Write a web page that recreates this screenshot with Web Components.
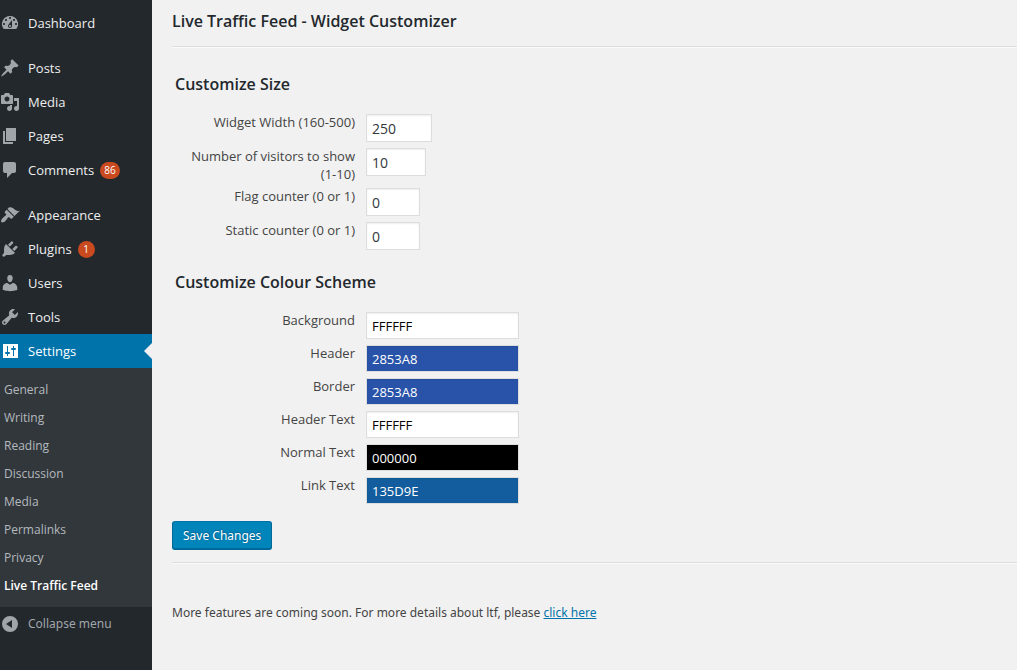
<!DOCTYPE html>
<html lang="en">
<head>
<meta charset="utf-8">
<title>Live Traffic Feed - Widget Customizer</title>
<style>
  html, body { margin: 0; min-height: 100%; background: #f1f1f1; }
  body { font: 13px/18px "Open Sans", "Noto Sans", sans-serif; color: #444; }
</style>
</head>
<body>
<admin-shell>
  <admin-menu slot="menu"></admin-menu>
  <widget-customizer></widget-customizer>
</admin-shell>

<script>
const define = (name, html, setup) => {
  const template = document.createElement('template');
  template.innerHTML = html;
  customElements.define(name, class extends HTMLElement {
    connectedCallback() {
      if (this.shadowRoot) return;
      this.attachShadow({ mode: 'open' }).append(template.content.cloneNode(true));
      if (setup) setup(this, this.shadowRoot);
    }
  });
};

const ICONS = {
  dashboard: 'M3.76 16h12.48A7.998 7.998 0 0 0 10 3a7.998 7.998 0 0 0-6.24 13zM10 4c.55 0 1 .45 1 1s-.45 1-1 1-1-.45-1-1 .45-1 1-1zM6 6c.55 0 1 .45 1 1s-.45 1-1 1-1-.45-1-1 .45-1 1-1zm8 0c.55 0 1 .45 1 1s-.45 1-1 1-1-.45-1-1 .45-1 1-1zm-5.37 5.55L12 7v6c0 1.1-.9 2-2 2s-2-.9-2-2c0-.57.24-1.08.63-1.45zM4 10c.55 0 1 .45 1 1s-.45 1-1 1-1-.45-1-1 .45-1 1-1zm12 0c.55 0 1 .45 1 1s-.45 1-1 1-1-.45-1-1 .45-1 1-1zm-5 3c0-.55-.45-1-1-1s-1 .45-1 1 .45 1 1 1 1-.45 1-1z',
  post: 'M10.44 3.02l1.82-1.82 6.36 6.35-1.83 1.82c-1.05-.68-2.48-.57-3.41.36l-.75.75c-.92.93-1.04 2.35-.35 3.41l-1.83 1.82-2.41-2.41-2.8 2.79c-.42.42-3.38 2.71-3.8 2.29s1.86-3.39 2.28-3.81l2.79-2.79L4.1 9.36l1.83-1.82c1.05.69 2.48.57 3.4-.36l.75-.75c.93-.92 1.05-2.35.36-3.41z',
  media: 'M13 11V4c0-.55-.45-1-1-1h-1.67L9 1H5L3.67 3H2c-.55 0-1 .45-1 1v7c0 .55.45 1 1 1h10c.55 0 1-.45 1-1zM7 4.5c1.38 0 2.5 1.12 2.5 2.5S8.38 9.5 7 9.5 4.5 8.38 4.5 7 5.62 4.5 7 4.5zM14 6h5v10.5c0 1.38-1.12 2.5-2.5 2.5S14 17.88 14 16.5s1.12-2.5 2.5-2.5c.17 0 .34.02.5.05V9h-3V6zm-4 8.05V13h2v3.5c0 1.38-1.12 2.5-2.5 2.5S7 17.88 7 16.5 8.12 14 9.5 14c.17 0 .34.02.5.05z',
  page: 'M6 15V2h10v13H6zm-1 1h8v2H3V5h2v11z',
  comments: 'M5 2h9c1.1 0 2 .9 2 2v7c0 1.1-.9 2-2 2h-2l-5 5v-5H5c-1.1 0-2-.9-2-2V4c0-1.1.9-2 2-2z',
  appearance: 'M14.48 11.06L7.41 3.99l1.5-1.5c.5-.56 2.3-.47 3.51.32 1.21.8 1.43 1.28 2.91 2.1 1.18.64 2.45 1.26 4.45.85zm-.71.71L6.7 4.7 4.93 6.47c-.39.39-.39 1.02 0 1.41l1.06 1.06c.39.39.39 1.03 0 1.42-.6.6-1.43 1.11-2.21 1.69-.35.26-.7.53-1.01.84C1.43 14.23.4 16.08 1.4 17.07c.99 1 2.84-.03 4.18-1.36.31-.31.58-.66.85-1.02.57-.78 1.08-1.61 1.69-2.21.39-.39 1.02-.39 1.41 0l1.06 1.06c.39.39 1.02.39 1.41 0z',
  plugins: 'M13.11 4.36L9.87 7.6 8 5.73l3.24-3.24c.35-.34 1.05-.2 1.56.32.52.51.66 1.21.31 1.55zm-8 1.77l.91-1.12 9.01 9.01-1.19.84c-.71.71-2.63 1.16-3.82 1.16H6.14L4.9 17.26c-.59.59-1.54.59-2.12 0-.59-.58-.59-1.53 0-2.12l1.24-1.24v-3.88c0-1.13.4-3.19 1.09-3.89zm7.26 3.97l3.24-3.24c.34-.35 1.04-.21 1.55.31.52.51.66 1.21.31 1.55l-3.24 3.25z',
  users: 'M10 9.25c-2.27 0-2.73-3.44-2.73-3.44C7 4.02 7.82 2 9.97 2c2.16 0 2.98 2.02 2.71 3.81 0 0-.41 3.44-2.68 3.44zm0 2.57L12.72 10c2.39 0 4.52 2.33 4.52 4.53v2.49s-3.65 1.13-7.24 1.13c-3.65 0-7.24-1.13-7.24-1.13v-2.49c0-2.25 1.94-4.48 4.47-4.48z',
  tools: 'M16.68 9.77c-1.34 1.34-3.3 1.67-4.95.99l-5.41 6.52c-.99.99-2.59.99-3.58 0s-.99-2.59 0-3.57l6.52-5.42c-.68-1.65-.35-3.61.99-4.95 1.28-1.28 3.12-1.62 4.72-1.06l-2.89 2.89 2.82 2.82 2.86-2.87c.53 1.58.18 3.39-1.08 4.65zM3.81 16.21c.4.39 1.04.39 1.43 0 .4-.4.4-1.04 0-1.43-.39-.4-1.03-.4-1.43 0-.39.39-.39 1.03 0 1.43z',
  settings: 'M18 3v14H3V3zM7 5h1v6h1a1 1 0 0 1 0 2H8v2H7v-2H6a1 1 0 0 1 0-2h1V5zM13 5h1v2h1a1 1 0 0 1 0 2h-1v6h-1V9h-1a1 1 0 0 1 0-2h1V5z',
  collapse: 'M10 2a8 8 0 1 0 0 16 8 8 0 0 0 0-16zM12 6v8l-6-4z'
};

define('menu-icon', `
  <style>
    :host { display: block; flex: none; width: 20px; height: 20px; }
    svg { display: block; fill: currentColor; fill-rule: evenodd; }
  </style>
  <svg width="20" height="20" viewBox="0 0 20 20" aria-hidden="true"><path/></svg>`,
  (host, root) => root.querySelector('path').setAttribute('d', ICONS[host.getAttribute('name')]));

define('count-badge', `
  <style>
    :host { display: block; box-sizing: border-box; min-width: 17px; padding: 0 4px; border-radius: 10px; background: #ca4a1f;
      color: #fff; font-size: 10px; line-height: 17px; text-align: center; }
  </style>
  <slot></slot>`);

define('menu-item', `
  <style>
    :host { display: block; color: #eee; font-size: 13px; }
    a { position: relative; display: flex; align-items: center; height: 34px; color: inherit; text-decoration: none; }
    menu-icon { margin-right: 8px; color: #a0a5aa; }
    ::slotted(count-badge) { margin-left: 6px; }
    :host([current]) { color: #fff; background: #0073aa; }
    :host([current]) menu-icon { color: #fff; }
    :host([current]) a::after { content: ""; position: absolute; right: 0; top: 9px;
      border: 8px solid transparent; border-right-color: #f1f1f1; border-left: 0; }
  </style>
  <a href="#"><menu-icon></menu-icon><slot></slot><slot name="badge"></slot></a>`,
  (host, root) => {
    const icon = document.createElement('menu-icon');
    icon.setAttribute('name', host.getAttribute('icon'));
    root.querySelector('menu-icon').replaceWith(icon);
  });

define('submenu-item', `
  <style>
    :host { display: block; color: #b4b9be; }
    a { display: block; padding: 0 4px; line-height: 28px; color: inherit; text-decoration: none; }
    :host([current]) { color: #fff; font-weight: 600; }
  </style>
  <a href="#"><slot></slot></a>`);

define('admin-menu', `
  <style>
    :host { display: block; padding-top: 6px; }
    section { margin-bottom: 11px; }
    section.last { margin: 0; }
    .sub { padding: 8px 0 7px; background: #32373c; font-size: 12px; }
    button { display: flex; align-items: center; width: 100%; height: 34px; gap: 8px; padding: 0; border: 0;
      background: none; color: #a0a5aa; font: 12px/18px "Noto Sans", sans-serif; text-align: left; }
  </style>
  <nav aria-label="Main menu">
    <section><menu-item icon="dashboard">Dashboard</menu-item></section>
    <section>
      <menu-item icon="post">Posts</menu-item>
      <menu-item icon="media">Media</menu-item>
      <menu-item icon="page">Pages</menu-item>
      <menu-item icon="comments">Comments<count-badge slot="badge">86</count-badge></menu-item>
    </section>
    <section class="last">
      <menu-item icon="appearance">Appearance</menu-item>
      <menu-item icon="plugins">Plugins<count-badge slot="badge">1</count-badge></menu-item>
      <menu-item icon="users">Users</menu-item>
      <menu-item icon="tools">Tools</menu-item>
      <menu-item icon="settings" current>Settings</menu-item>
      <div class="sub">
        <submenu-item>General</submenu-item>
        <submenu-item>Writing</submenu-item>
        <submenu-item>Reading</submenu-item>
        <submenu-item>Discussion</submenu-item>
        <submenu-item>Media</submenu-item>
        <submenu-item>Permalinks</submenu-item>
        <submenu-item>Privacy</submenu-item>
        <submenu-item current>Live Traffic Feed</submenu-item>
      </div>
    </section>
    <button type="button"><menu-icon name="collapse"></menu-icon>Collapse menu</button>
  </nav>`);

define('form-field', `
  <style>
    :host { display: grid; grid-template-columns: 180px 1fr; column-gap: 11px; align-items: start; min-height: 30px; }
    label { margin: -1px 0 1px; text-align: right; line-height: 18px; font-weight: 500; }
    input { box-sizing: border-box; width: 66px; height: 28px; margin: 0; padding: 2px 5px; border: 1px solid #ddd;
      border-radius: 0; box-shadow: inset 0 1px 2px rgba(0,0,0,.07); background: #fff; color: #32373c;
      font: inherit; font-size: 14px; }
    :host([size="2"]) input { width: 60px; }
    :host([size="1"]) input { width: 54px; }
    :host([color]) { min-height: 29px; }
    :host([color]) input { width: 153px; height: 27px; font-size: 13px; }
  </style>
  <label for="value"><slot></slot></label>
  <input id="value" type="text">`,
  (host, root) => {
    const input = root.querySelector('input');
    const color = host.getAttribute('color');
    input.value = color || host.getAttribute('value');
    if (color) {
      input.style.backgroundColor = '#' + color;
      input.style.color = color === 'FFFFFF' ? '#000' : '#fff';
    }
  });

define('field-group', `
  <style>
    :host { display: block; padding: 0 3px; }
    h2 { margin: 0 0 18px; font-size: 16px; line-height: 24px; font-weight: 600; color: #23282d; }
    div { display: grid; row-gap: 4px; }
  </style>
  <h2></h2>
  <div><slot></slot></div>`,
  (host, root) => { root.querySelector('h2').textContent = host.getAttribute('heading'); });

define('save-button', `
  <style>
    :host { display: block; }
    button { height: 29px; padding: 0 10px; border: 1px solid #006799; border-top-color: #0073aa; border-radius: 3px;
      background: #0085ba; box-shadow: inset 0 -1px 0 #006799; color: #fff; font: 12px/26px "Noto Sans", sans-serif;
      text-shadow: 0 -1px 1px #006799, 1px 0 1px #006799; }
  </style>
  <button type="submit"><slot></slot></button>`);

define('widget-customizer', `
  <style>
    :host { display: block; padding: 9px 0 0 20px; }
    h1 { margin: 0; font-size: 16px; line-height: 24px; font-weight: 600; color: #23282d; }
    hr { margin: 0; border: 0; border-top: 1px solid #ddd; border-bottom: 1px solid #fafafa; }
    h1 + hr { margin-top: 13px; }
    form { margin: 0; padding: 24px 0 12px; }
    field-group { margin-bottom: 18px; }
    save-button { margin-top: -3px; }
    p { margin: 0; padding: 40px 0; font: 12px/18px "Noto Sans", sans-serif; }
    a { color: #0073aa; }
  </style>
  <h1>Live Traffic Feed - Widget Customizer</h1>
  <hr>
  <form>
    <field-group heading="Customize Size">
      <form-field value="250">Widget Width (160-500)</form-field>
      <form-field value="10" size="2">Number of visitors to show (1-10)</form-field>
      <form-field value="0" size="1">Flag counter (0 or 1)</form-field>
      <form-field value="0" size="1">Static counter (0 or 1)</form-field>
    </field-group>
    <field-group heading="Customize Colour Scheme">
      <form-field color="FFFFFF">Background</form-field>
      <form-field color="2853A8">Header</form-field>
      <form-field color="2853A8">Border</form-field>
      <form-field color="FFFFFF">Header Text</form-field>
      <form-field color="000000">Normal Text</form-field>
      <form-field color="135D9E">Link Text</form-field>
    </field-group>
    <save-button>Save Changes</save-button>
  </form>
  <hr>
  <p>More features are coming soon. For more details about ltf, please <a href="#">click here</a></p>`);

define('admin-shell', `
  <style>
    :host { display: grid; grid-template-columns: 152px minmax(0, 1fr); min-height: 100vh; }
    aside { background: #23282d; }
  </style>
  <aside><slot name="menu"></slot></aside>
  <main><slot></slot></main>`);
</script>
</body>
</html>
